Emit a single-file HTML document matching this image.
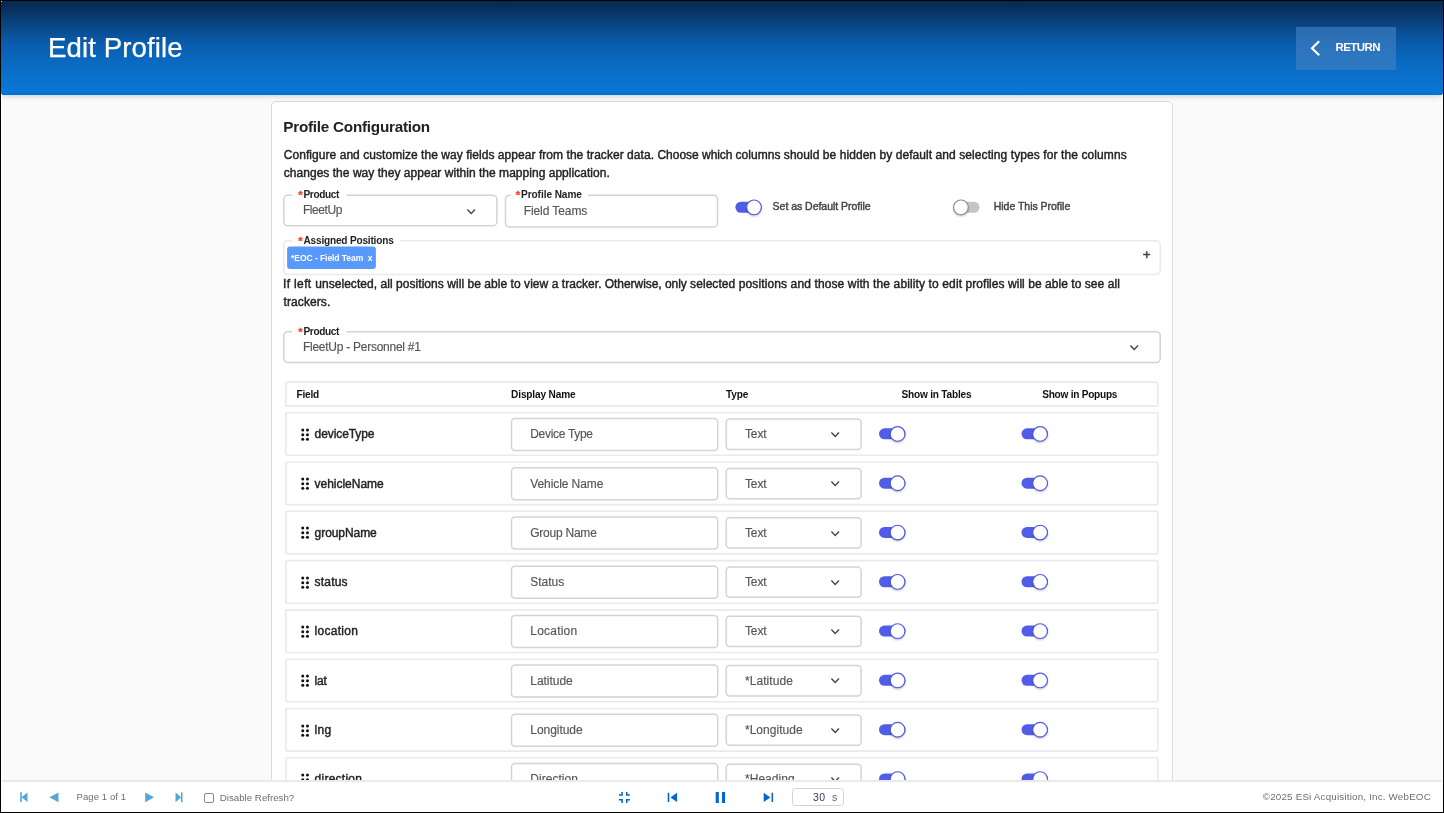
<!DOCTYPE html>
<html lang="en">
<head>
<meta charset="utf-8">
<title>Edit Profile</title>
<style>
*{box-sizing:border-box;margin:0;padding:0}
html,body{width:1444px;height:813px;overflow:hidden}
body{font-family:"Liberation Sans",sans-serif;color:#222;background:#fafafa;position:relative}
.a{position:absolute}
.t{position:absolute;white-space:nowrap}
#hdr{left:1px;top:1px;width:1442px;height:93.5px;border-radius:0 0 3px 3px;
 background:linear-gradient(180deg,#082850 0%,#082b56 4.3%,#09386c 15%,#0a4c8f 31%,#0a5eb0 47%,#0a68bf 63%,#0a72ce 84.4%,#0878d9 100%);
 box-shadow:0 1px 6px rgba(0,0,0,.19)}
#ret{left:1296px;top:26.6px;width:99.7px;height:43.3px;background:rgba(66,129,196,.64)}
#card{left:271px;top:101px;width:902px;height:760px;background:#fff;border:1px solid #dadada;border-radius:5px}
#foot{left:1px;top:780px;width:1442px;height:32px;background:#fff;border-top:2px solid #eaeaea}
.edge{background:#000}
</style>
</head>
<body>
<div class="a" id="card"></div>
<div class="a" id="hdr"></div>
<div class="a" style="left:1px;top:93px;width:1442px;height:1.6px;background:#0470d7;border-radius:0 0 3px 3px"></div>
<div class="a" id="ret"></div>
<svg class="a" style="left:1308px;top:38px" width="16" height="20" viewBox="0 0 16 20"><path d="M11.2 3.3 L4 10.3 L11.2 17.3" fill="none" stroke="#fff" stroke-width="2.2" stroke-linecap="butt" stroke-linejoin="miter"/></svg>
<svg class="a" style="left:0;top:0" width="1444" height="813" viewBox="0 0 1444 813"><defs><filter id="kb" x="-50%" y="-50%" width="200%" height="200%"><feGaussianBlur stdDeviation="0.9"/></filter></defs><rect x="283.8" y="195.25" width="213.1" height="30.45" rx="4" fill="#fff" stroke="#d3d3d3" stroke-width="1.5"/><rect x="292.3" y="193.75" width="54.2" height="3" fill="#fff"/><rect x="505.5" y="195.2" width="212" height="31.7" rx="4" fill="#fff" stroke="#d3d3d3" stroke-width="1.5"/><rect x="510.8" y="193.7" width="77.2" height="3" fill="#fff"/><rect x="283.7" y="240.8" width="876.6" height="33.65" rx="4" fill="#fff" stroke="#e9e9ee" stroke-width="1.6"/><rect x="292.3" y="239.3" width="108.2" height="3" fill="#fff"/><rect x="283.8" y="331.7" width="876.4" height="30.9" rx="4" fill="#fff" stroke="#d3d3d3" stroke-width="1.5"/><rect x="292.3" y="330.2" width="54.2" height="3" fill="#fff"/><rect x="287.1" y="246.6" width="88.8" height="22.3" rx="3" fill="#5999fb"/><rect x="285.8" y="382.1" width="872" height="24" rx="1.2" fill="#fff" stroke="#e9eaf0" stroke-width="1.6"/><rect x="285.8" y="412.7" width="872" height="42.6" rx="1.2" fill="#fff" stroke="#e9eaf0" stroke-width="1.6"/><rect x="511.5" y="418.4" width="206.2" height="32" rx="3.5" fill="#fff" stroke="#d4d4d4" stroke-width="1.5"/><rect x="726.2" y="419.1" width="134.9" height="30.3" rx="3.5" fill="#fff" stroke="#d4d4d4" stroke-width="1.5"/><rect x="285.8" y="462" width="872" height="42.6" rx="1.2" fill="#fff" stroke="#e9eaf0" stroke-width="1.6"/><rect x="511.5" y="467.7" width="206.2" height="32" rx="3.5" fill="#fff" stroke="#d4d4d4" stroke-width="1.5"/><rect x="726.2" y="468.4" width="134.9" height="30.3" rx="3.5" fill="#fff" stroke="#d4d4d4" stroke-width="1.5"/><rect x="285.8" y="511.3" width="872" height="42.6" rx="1.2" fill="#fff" stroke="#e9eaf0" stroke-width="1.6"/><rect x="511.5" y="517" width="206.2" height="32" rx="3.5" fill="#fff" stroke="#d4d4d4" stroke-width="1.5"/><rect x="726.2" y="517.7" width="134.9" height="30.3" rx="3.5" fill="#fff" stroke="#d4d4d4" stroke-width="1.5"/><rect x="285.8" y="560.6" width="872" height="42.6" rx="1.2" fill="#fff" stroke="#e9eaf0" stroke-width="1.6"/><rect x="511.5" y="566.3" width="206.2" height="32" rx="3.5" fill="#fff" stroke="#d4d4d4" stroke-width="1.5"/><rect x="726.2" y="567" width="134.9" height="30.3" rx="3.5" fill="#fff" stroke="#d4d4d4" stroke-width="1.5"/><rect x="285.8" y="609.9" width="872" height="42.6" rx="1.2" fill="#fff" stroke="#e9eaf0" stroke-width="1.6"/><rect x="511.5" y="615.6" width="206.2" height="32" rx="3.5" fill="#fff" stroke="#d4d4d4" stroke-width="1.5"/><rect x="726.2" y="616.3" width="134.9" height="30.3" rx="3.5" fill="#fff" stroke="#d4d4d4" stroke-width="1.5"/><rect x="285.8" y="659.2" width="872" height="42.6" rx="1.2" fill="#fff" stroke="#e9eaf0" stroke-width="1.6"/><rect x="511.5" y="664.9" width="206.2" height="32" rx="3.5" fill="#fff" stroke="#d4d4d4" stroke-width="1.5"/><rect x="726.2" y="665.6" width="134.9" height="30.3" rx="3.5" fill="#fff" stroke="#d4d4d4" stroke-width="1.5"/><rect x="285.8" y="708.5" width="872" height="42.6" rx="1.2" fill="#fff" stroke="#e9eaf0" stroke-width="1.6"/><rect x="511.5" y="714.2" width="206.2" height="32" rx="3.5" fill="#fff" stroke="#d4d4d4" stroke-width="1.5"/><rect x="726.2" y="714.9" width="134.9" height="30.3" rx="3.5" fill="#fff" stroke="#d4d4d4" stroke-width="1.5"/><rect x="285.8" y="757.8" width="872" height="42.6" rx="1.2" fill="#fff" stroke="#e9eaf0" stroke-width="1.6"/><rect x="511.5" y="763.5" width="206.2" height="32" rx="3.5" fill="#fff" stroke="#d4d4d4" stroke-width="1.5"/><rect x="726.2" y="764.2" width="134.9" height="30.3" rx="3.5" fill="#fff" stroke="#d4d4d4" stroke-width="1.5"/></svg>
<div class="t" style="left:298.3px;top:189px;font-size:11.5px;line-height:13px;color:#f44336;font-weight:bold;-webkit-text-stroke:0.3px #f44336">*</div>
<div class="t" style="left:515.8px;top:189px;font-size:11.5px;line-height:13px;color:#f44336;font-weight:bold;-webkit-text-stroke:0.3px #f44336">*</div>
<div class="t" style="left:298.3px;top:235px;font-size:11.5px;line-height:13px;color:#f44336;font-weight:bold;-webkit-text-stroke:0.3px #f44336">*</div>
<div class="t" style="left:298.3px;top:326px;font-size:11.5px;line-height:13px;color:#f44336;font-weight:bold;-webkit-text-stroke:0.3px #f44336">*</div>
<svg class="a" style="left:466px;top:208px" width="10.4" height="7.1" viewBox="-1 -1 10.4 7.1"><path d="M0.4 0.5 L4.2 4.5 L8 0.5" fill="none" stroke="#444" stroke-width="1.35" stroke-linejoin="miter"/></svg>
<svg class="a" style="left:1129.2px;top:343.7px" width="10.4" height="7.1" viewBox="-1 -1 10.4 7.1"><path d="M0.4 0.5 L4.2 4.5 L8 0.5" fill="none" stroke="#444" stroke-width="1.35" stroke-linejoin="miter"/></svg>
<svg class="a" style="left:732px;top:195px" width="36" height="26" viewBox="0 0 36 26"><rect x="3.4" y="6.75" width="26.5" height="11" rx="5.5" fill="#525de7"/><ellipse cx="22" cy="13.65" rx="7.6" ry="7.4" fill="rgba(0,0,0,.28)" filter="url(#kb)"/><circle cx="22" cy="12.35" r="7.35" fill="#fff" stroke="#4f59e2" stroke-width="1.1"/></svg>
<svg class="a" style="left:950px;top:195px" width="36" height="26" viewBox="0 0 36 26"><rect x="3" y="6.75" width="26.5" height="11" rx="5.5" fill="#c5c5c5"/><ellipse cx="10.9" cy="13.65" rx="7.6" ry="7.4" fill="rgba(0,0,0,.28)" filter="url(#kb)"/><circle cx="10.9" cy="12.35" r="7.35" fill="#fff" stroke="#8a8a8a" stroke-width="1.1"/></svg>
<svg class="a" style="left:300px;top:425.85px" width="10" height="16" viewBox="0 0 10 16"><circle cx="2.75" cy="4" r="1.5" fill="#111"/><circle cx="2.75" cy="8.7" r="1.5" fill="#111"/><circle cx="2.75" cy="13.3" r="1.5" fill="#111"/><circle cx="7.45" cy="4" r="1.5" fill="#111"/><circle cx="7.45" cy="8.7" r="1.5" fill="#111"/><circle cx="7.45" cy="13.3" r="1.5" fill="#111"/></svg>
<svg class="a" style="left:830px;top:430.9px" width="10.4" height="7.1" viewBox="-1 -1 10.4 7.1"><path d="M0.4 0.5 L4.2 4.5 L8 0.5" fill="none" stroke="#444" stroke-width="1.35" stroke-linejoin="miter"/></svg>
<svg class="a" style="left:876px;top:421px" width="36" height="26" viewBox="0 0 36 26"><rect x="3" y="7.35" width="26.5" height="11" rx="5.5" fill="#525de7"/><ellipse cx="21.6" cy="14.25" rx="7.6" ry="7.4" fill="rgba(0,0,0,.28)" filter="url(#kb)"/><circle cx="21.6" cy="12.95" r="7.35" fill="#fff" stroke="#4f59e2" stroke-width="1.1"/></svg>
<svg class="a" style="left:1018px;top:421px" width="36" height="26" viewBox="0 0 36 26"><rect x="3.5" y="7.35" width="26.5" height="11" rx="5.5" fill="#525de7"/><ellipse cx="22.1" cy="14.25" rx="7.6" ry="7.4" fill="rgba(0,0,0,.28)" filter="url(#kb)"/><circle cx="22.1" cy="12.95" r="7.35" fill="#fff" stroke="#4f59e2" stroke-width="1.1"/></svg>
<svg class="a" style="left:300px;top:475.15px" width="10" height="16" viewBox="0 0 10 16"><circle cx="2.75" cy="4" r="1.5" fill="#111"/><circle cx="2.75" cy="8.7" r="1.5" fill="#111"/><circle cx="2.75" cy="13.3" r="1.5" fill="#111"/><circle cx="7.45" cy="4" r="1.5" fill="#111"/><circle cx="7.45" cy="8.7" r="1.5" fill="#111"/><circle cx="7.45" cy="13.3" r="1.5" fill="#111"/></svg>
<svg class="a" style="left:830px;top:480.2px" width="10.4" height="7.1" viewBox="-1 -1 10.4 7.1"><path d="M0.4 0.5 L4.2 4.5 L8 0.5" fill="none" stroke="#444" stroke-width="1.35" stroke-linejoin="miter"/></svg>
<svg class="a" style="left:876px;top:471px" width="36" height="26" viewBox="0 0 36 26"><rect x="3" y="6.65" width="26.5" height="11" rx="5.5" fill="#525de7"/><ellipse cx="21.6" cy="13.55" rx="7.6" ry="7.4" fill="rgba(0,0,0,.28)" filter="url(#kb)"/><circle cx="21.6" cy="12.25" r="7.35" fill="#fff" stroke="#4f59e2" stroke-width="1.1"/></svg>
<svg class="a" style="left:1018px;top:471px" width="36" height="26" viewBox="0 0 36 26"><rect x="3.5" y="6.65" width="26.5" height="11" rx="5.5" fill="#525de7"/><ellipse cx="22.1" cy="13.55" rx="7.6" ry="7.4" fill="rgba(0,0,0,.28)" filter="url(#kb)"/><circle cx="22.1" cy="12.25" r="7.35" fill="#fff" stroke="#4f59e2" stroke-width="1.1"/></svg>
<svg class="a" style="left:300px;top:524.45px" width="10" height="16" viewBox="0 0 10 16"><circle cx="2.75" cy="4" r="1.5" fill="#111"/><circle cx="2.75" cy="8.7" r="1.5" fill="#111"/><circle cx="2.75" cy="13.3" r="1.5" fill="#111"/><circle cx="7.45" cy="4" r="1.5" fill="#111"/><circle cx="7.45" cy="8.7" r="1.5" fill="#111"/><circle cx="7.45" cy="13.3" r="1.5" fill="#111"/></svg>
<svg class="a" style="left:830px;top:529.5px" width="10.4" height="7.1" viewBox="-1 -1 10.4 7.1"><path d="M0.4 0.5 L4.2 4.5 L8 0.5" fill="none" stroke="#444" stroke-width="1.35" stroke-linejoin="miter"/></svg>
<svg class="a" style="left:876px;top:520px" width="36" height="26" viewBox="0 0 36 26"><rect x="3" y="6.95" width="26.5" height="11" rx="5.5" fill="#525de7"/><ellipse cx="21.6" cy="13.85" rx="7.6" ry="7.4" fill="rgba(0,0,0,.28)" filter="url(#kb)"/><circle cx="21.6" cy="12.55" r="7.35" fill="#fff" stroke="#4f59e2" stroke-width="1.1"/></svg>
<svg class="a" style="left:1018px;top:520px" width="36" height="26" viewBox="0 0 36 26"><rect x="3.5" y="6.95" width="26.5" height="11" rx="5.5" fill="#525de7"/><ellipse cx="22.1" cy="13.85" rx="7.6" ry="7.4" fill="rgba(0,0,0,.28)" filter="url(#kb)"/><circle cx="22.1" cy="12.55" r="7.35" fill="#fff" stroke="#4f59e2" stroke-width="1.1"/></svg>
<svg class="a" style="left:300px;top:573.75px" width="10" height="16" viewBox="0 0 10 16"><circle cx="2.75" cy="4" r="1.5" fill="#111"/><circle cx="2.75" cy="8.7" r="1.5" fill="#111"/><circle cx="2.75" cy="13.3" r="1.5" fill="#111"/><circle cx="7.45" cy="4" r="1.5" fill="#111"/><circle cx="7.45" cy="8.7" r="1.5" fill="#111"/><circle cx="7.45" cy="13.3" r="1.5" fill="#111"/></svg>
<svg class="a" style="left:830px;top:578.8px" width="10.4" height="7.1" viewBox="-1 -1 10.4 7.1"><path d="M0.4 0.5 L4.2 4.5 L8 0.5" fill="none" stroke="#444" stroke-width="1.35" stroke-linejoin="miter"/></svg>
<svg class="a" style="left:876px;top:569px" width="36" height="26" viewBox="0 0 36 26"><rect x="3" y="7.25" width="26.5" height="11" rx="5.5" fill="#525de7"/><ellipse cx="21.6" cy="14.15" rx="7.6" ry="7.4" fill="rgba(0,0,0,.28)" filter="url(#kb)"/><circle cx="21.6" cy="12.85" r="7.35" fill="#fff" stroke="#4f59e2" stroke-width="1.1"/></svg>
<svg class="a" style="left:1018px;top:569px" width="36" height="26" viewBox="0 0 36 26"><rect x="3.5" y="7.25" width="26.5" height="11" rx="5.5" fill="#525de7"/><ellipse cx="22.1" cy="14.15" rx="7.6" ry="7.4" fill="rgba(0,0,0,.28)" filter="url(#kb)"/><circle cx="22.1" cy="12.85" r="7.35" fill="#fff" stroke="#4f59e2" stroke-width="1.1"/></svg>
<svg class="a" style="left:300px;top:623.05px" width="10" height="16" viewBox="0 0 10 16"><circle cx="2.75" cy="4" r="1.5" fill="#111"/><circle cx="2.75" cy="8.7" r="1.5" fill="#111"/><circle cx="2.75" cy="13.3" r="1.5" fill="#111"/><circle cx="7.45" cy="4" r="1.5" fill="#111"/><circle cx="7.45" cy="8.7" r="1.5" fill="#111"/><circle cx="7.45" cy="13.3" r="1.5" fill="#111"/></svg>
<svg class="a" style="left:830px;top:628.1px" width="10.4" height="7.1" viewBox="-1 -1 10.4 7.1"><path d="M0.4 0.5 L4.2 4.5 L8 0.5" fill="none" stroke="#444" stroke-width="1.35" stroke-linejoin="miter"/></svg>
<svg class="a" style="left:876px;top:619px" width="36" height="26" viewBox="0 0 36 26"><rect x="3" y="6.55" width="26.5" height="11" rx="5.5" fill="#525de7"/><ellipse cx="21.6" cy="13.45" rx="7.6" ry="7.4" fill="rgba(0,0,0,.28)" filter="url(#kb)"/><circle cx="21.6" cy="12.15" r="7.35" fill="#fff" stroke="#4f59e2" stroke-width="1.1"/></svg>
<svg class="a" style="left:1018px;top:619px" width="36" height="26" viewBox="0 0 36 26"><rect x="3.5" y="6.55" width="26.5" height="11" rx="5.5" fill="#525de7"/><ellipse cx="22.1" cy="13.45" rx="7.6" ry="7.4" fill="rgba(0,0,0,.28)" filter="url(#kb)"/><circle cx="22.1" cy="12.15" r="7.35" fill="#fff" stroke="#4f59e2" stroke-width="1.1"/></svg>
<svg class="a" style="left:300px;top:672.35px" width="10" height="16" viewBox="0 0 10 16"><circle cx="2.75" cy="4" r="1.5" fill="#111"/><circle cx="2.75" cy="8.7" r="1.5" fill="#111"/><circle cx="2.75" cy="13.3" r="1.5" fill="#111"/><circle cx="7.45" cy="4" r="1.5" fill="#111"/><circle cx="7.45" cy="8.7" r="1.5" fill="#111"/><circle cx="7.45" cy="13.3" r="1.5" fill="#111"/></svg>
<svg class="a" style="left:830px;top:677.4px" width="10.4" height="7.1" viewBox="-1 -1 10.4 7.1"><path d="M0.4 0.5 L4.2 4.5 L8 0.5" fill="none" stroke="#444" stroke-width="1.35" stroke-linejoin="miter"/></svg>
<svg class="a" style="left:876px;top:668px" width="36" height="26" viewBox="0 0 36 26"><rect x="3" y="6.85" width="26.5" height="11" rx="5.5" fill="#525de7"/><ellipse cx="21.6" cy="13.75" rx="7.6" ry="7.4" fill="rgba(0,0,0,.28)" filter="url(#kb)"/><circle cx="21.6" cy="12.45" r="7.35" fill="#fff" stroke="#4f59e2" stroke-width="1.1"/></svg>
<svg class="a" style="left:1018px;top:668px" width="36" height="26" viewBox="0 0 36 26"><rect x="3.5" y="6.85" width="26.5" height="11" rx="5.5" fill="#525de7"/><ellipse cx="22.1" cy="13.75" rx="7.6" ry="7.4" fill="rgba(0,0,0,.28)" filter="url(#kb)"/><circle cx="22.1" cy="12.45" r="7.35" fill="#fff" stroke="#4f59e2" stroke-width="1.1"/></svg>
<svg class="a" style="left:300px;top:721.65px" width="10" height="16" viewBox="0 0 10 16"><circle cx="2.75" cy="4" r="1.5" fill="#111"/><circle cx="2.75" cy="8.7" r="1.5" fill="#111"/><circle cx="2.75" cy="13.3" r="1.5" fill="#111"/><circle cx="7.45" cy="4" r="1.5" fill="#111"/><circle cx="7.45" cy="8.7" r="1.5" fill="#111"/><circle cx="7.45" cy="13.3" r="1.5" fill="#111"/></svg>
<svg class="a" style="left:830px;top:726.7px" width="10.4" height="7.1" viewBox="-1 -1 10.4 7.1"><path d="M0.4 0.5 L4.2 4.5 L8 0.5" fill="none" stroke="#444" stroke-width="1.35" stroke-linejoin="miter"/></svg>
<svg class="a" style="left:876px;top:717px" width="36" height="26" viewBox="0 0 36 26"><rect x="3" y="7.15" width="26.5" height="11" rx="5.5" fill="#525de7"/><ellipse cx="21.6" cy="14.05" rx="7.6" ry="7.4" fill="rgba(0,0,0,.28)" filter="url(#kb)"/><circle cx="21.6" cy="12.75" r="7.35" fill="#fff" stroke="#4f59e2" stroke-width="1.1"/></svg>
<svg class="a" style="left:1018px;top:717px" width="36" height="26" viewBox="0 0 36 26"><rect x="3.5" y="7.15" width="26.5" height="11" rx="5.5" fill="#525de7"/><ellipse cx="22.1" cy="14.05" rx="7.6" ry="7.4" fill="rgba(0,0,0,.28)" filter="url(#kb)"/><circle cx="22.1" cy="12.75" r="7.35" fill="#fff" stroke="#4f59e2" stroke-width="1.1"/></svg>
<svg class="a" style="left:300px;top:770.95px" width="10" height="16" viewBox="0 0 10 16"><circle cx="2.75" cy="4" r="1.5" fill="#111"/><circle cx="2.75" cy="8.7" r="1.5" fill="#111"/><circle cx="2.75" cy="13.3" r="1.5" fill="#111"/><circle cx="7.45" cy="4" r="1.5" fill="#111"/><circle cx="7.45" cy="8.7" r="1.5" fill="#111"/><circle cx="7.45" cy="13.3" r="1.5" fill="#111"/></svg>
<svg class="a" style="left:830px;top:776px" width="10.4" height="7.1" viewBox="-1 -1 10.4 7.1"><path d="M0.4 0.5 L4.2 4.5 L8 0.5" fill="none" stroke="#444" stroke-width="1.35" stroke-linejoin="miter"/></svg>
<svg class="a" style="left:876px;top:766px" width="36" height="26" viewBox="0 0 36 26"><rect x="3" y="7.45" width="26.5" height="11" rx="5.5" fill="#525de7"/><ellipse cx="21.6" cy="14.35" rx="7.6" ry="7.4" fill="rgba(0,0,0,.28)" filter="url(#kb)"/><circle cx="21.6" cy="13.05" r="7.35" fill="#fff" stroke="#4f59e2" stroke-width="1.1"/></svg>
<svg class="a" style="left:1018px;top:766px" width="36" height="26" viewBox="0 0 36 26"><rect x="3.5" y="7.45" width="26.5" height="11" rx="5.5" fill="#525de7"/><ellipse cx="22.1" cy="14.35" rx="7.6" ry="7.4" fill="rgba(0,0,0,.28)" filter="url(#kb)"/><circle cx="22.1" cy="13.05" r="7.35" fill="#fff" stroke="#4f59e2" stroke-width="1.1"/></svg>
<div class="a" id="tx" style="left:0;top:0;width:1444px;height:813px;will-change:transform">
<div class="t" style="left:47.92px;top:31px;font-size:27.6px;line-height:33px;color:#fff;letter-spacing:0.12px;-webkit-text-stroke:0.25px #fff">Edit Profile</div>
<div class="t" style="left:1335.5px;top:40px;font-size:11.5px;line-height:14px;color:#fff;font-weight:bold;letter-spacing:-0.58px">RETURN</div>
<div class="t" style="left:283.3px;top:117px;font-size:15.25px;line-height:19px;color:#222;font-weight:bold;letter-spacing:-0.24px">Profile Configuration</div>
<div class="t" style="left:283.81px;top:147px;font-size:12px;line-height:16px;color:#222;letter-spacing:0.05px;-webkit-text-stroke:0.42px #222">Configure and customize the way fields appear from </div>
<div class="t" style="left:566.51px;top:147px;font-size:12px;line-height:16px;color:#222;letter-spacing:0.05px;-webkit-text-stroke:0.42px #222">the tracker data. </div>
<div class="t" style="left:657.41px;top:147px;font-size:12px;line-height:16px;color:#222;-webkit-text-stroke:0.42px #222">Choose </div>
<div class="t" style="left:702.11px;top:147px;font-size:12px;line-height:16px;color:#222;letter-spacing:-0.1px;-webkit-text-stroke:0.42px #222">which </div>
<div class="t" style="left:735.51px;top:147px;font-size:12px;line-height:16px;color:#222;letter-spacing:0.04px;-webkit-text-stroke:0.42px #222">columns should be </div>
<div class="t" style="left:839.71px;top:147px;font-size:12px;line-height:16px;color:#222;letter-spacing:0.06px;-webkit-text-stroke:0.42px #222">hidden by default and </div>
<div class="t" style="left:959.21px;top:147px;font-size:12px;line-height:16px;color:#222;letter-spacing:0.09px;-webkit-text-stroke:0.42px #222">selecting types for the columns</div>
<div class="t" style="left:283.81px;top:165px;font-size:12px;line-height:16px;color:#222;letter-spacing:0.03px;-webkit-text-stroke:0.42px #222">changes the way they appear within the mapping application.</div>
<div class="t" style="left:303.5px;top:188px;font-size:10.1px;line-height:13px;color:#222;font-weight:bold;letter-spacing:-0.36px">Product</div>
<div class="t" style="left:521px;top:188px;font-size:10.1px;line-height:13px;color:#222;font-weight:bold;letter-spacing:-0.07px">Profile Name</div>
<div class="t" style="left:303.5px;top:234px;font-size:10.1px;line-height:13px;color:#222;font-weight:bold;letter-spacing:-0.2px">Assigned Positions</div>
<div class="t" style="left:303.5px;top:325px;font-size:10.1px;line-height:13px;color:#222;font-weight:bold;letter-spacing:-0.36px">Product</div>
<div class="t" style="left:302.97px;top:202px;font-size:12px;line-height:16px;color:#555;letter-spacing:-0.43px;-webkit-text-stroke:0.15px #555">FleetUp</div>
<div class="t" style="left:523.68px;top:203px;font-size:12px;line-height:16px;color:#555;letter-spacing:-0.08px;-webkit-text-stroke:0.15px #555">Field Teams</div>
<div class="t" style="left:302.97px;top:339px;font-size:12px;line-height:16px;color:#555;letter-spacing:-0.26px;-webkit-text-stroke:0.15px #555">FleetUp - Personnel #1</div>
<div class="t" style="left:772.61px;top:199px;font-size:10.5px;line-height:14px;color:#444;letter-spacing:-0.03px;-webkit-text-stroke:0.42px #444">Set as Default Profile</div>
<div class="t" style="left:993.71px;top:199px;font-size:10.5px;line-height:14px;color:#444;letter-spacing:-0.02px;-webkit-text-stroke:0.42px #444">Hide This Profile</div>
<div class="t" style="left:291.1px;top:252px;font-size:8.5px;line-height:12px;color:#fff;font-weight:bold;letter-spacing:-0.06px">*EOC - Field Team</div>
<div class="t" style="left:367.7px;top:252px;font-size:8.5px;line-height:12px;color:#fff;font-weight:bold">x</div>
<div class="t" style="left:1142.68px;top:246px;font-size:13.5px;line-height:17px;color:#444;-webkit-text-stroke:0.55px #444">+</div>
<div class="t" style="left:283.01px;top:276px;font-size:12px;line-height:16px;color:#222;letter-spacing:0.36px;-webkit-text-stroke:0.42px #222">If left </div>
<div class="t" style="left:315.21px;top:276px;font-size:12px;line-height:16px;color:#222;letter-spacing:0.05px;-webkit-text-stroke:0.42px #222">unselected, all positions will be able to view a tracker. </div>
<div class="t" style="left:604.71px;top:276px;font-size:12px;line-height:16px;color:#222;letter-spacing:-0.04px;-webkit-text-stroke:0.42px #222">Otherwise, only </div>
<div class="t" style="left:690.11px;top:276px;font-size:12px;line-height:16px;color:#222;letter-spacing:0.06px;-webkit-text-stroke:0.42px #222">selected </div>
<div class="t" style="left:738.71px;top:276px;font-size:12px;line-height:16px;color:#222;letter-spacing:0.12px;-webkit-text-stroke:0.42px #222">positions and those with the ability to edit </div>
<div class="t" style="left:965.51px;top:276px;font-size:12px;line-height:16px;color:#222;letter-spacing:0.05px;-webkit-text-stroke:0.42px #222">profiles will be able to see all</div>
<div class="t" style="left:283.61px;top:294px;font-size:12px;line-height:16px;color:#222;letter-spacing:0.08px;-webkit-text-stroke:0.42px #222">trackers.</div>
<div class="t" style="left:296.6px;top:388px;font-size:10.1px;line-height:13px;color:#111;font-weight:bold;letter-spacing:-0.25px">Field</div>
<div class="t" style="left:511.1px;top:388px;font-size:10.1px;line-height:13px;color:#111;font-weight:bold;letter-spacing:-0.15px">Display Name</div>
<div class="t" style="left:726.1px;top:388px;font-size:10.1px;line-height:13px;color:#111;font-weight:bold;letter-spacing:-0.2px">Type</div>
<div class="t" style="left:901.5px;top:388px;font-size:10.1px;line-height:13px;color:#111;font-weight:bold;letter-spacing:-0.21px">Show in Tables</div>
<div class="t" style="left:1042.2px;top:388px;font-size:10.1px;line-height:13px;color:#111;font-weight:bold;letter-spacing:-0.25px">Show in Popups</div>
<div class="t" style="left:314.61px;top:426px;font-size:12px;line-height:16px;color:#222;letter-spacing:-0.09px;-webkit-text-stroke:0.42px #222">deviceType</div>
<div class="t" style="left:530.28px;top:426px;font-size:12px;line-height:16px;color:#555;letter-spacing:-0.31px;-webkit-text-stroke:0.15px #555">Device Type</div>
<div class="t" style="left:744.98px;top:426px;font-size:12px;line-height:16px;color:#555;letter-spacing:-0.11px;-webkit-text-stroke:0.15px #555">Text</div>
<div class="t" style="left:314.61px;top:476px;font-size:12px;line-height:16px;color:#222;letter-spacing:-0.03px;-webkit-text-stroke:0.42px #222">vehicleName</div>
<div class="t" style="left:530.28px;top:476px;font-size:12px;line-height:16px;color:#555;letter-spacing:-0.09px;-webkit-text-stroke:0.15px #555">Vehicle Name</div>
<div class="t" style="left:744.98px;top:476px;font-size:12px;line-height:16px;color:#555;letter-spacing:-0.11px;-webkit-text-stroke:0.15px #555">Text</div>
<div class="t" style="left:314.61px;top:525px;font-size:12px;line-height:16px;color:#222;letter-spacing:-0.07px;-webkit-text-stroke:0.42px #222">groupName</div>
<div class="t" style="left:530.28px;top:525px;font-size:12px;line-height:16px;color:#555;letter-spacing:-0.24px;-webkit-text-stroke:0.15px #555">Group Name</div>
<div class="t" style="left:744.98px;top:525px;font-size:12px;line-height:16px;color:#555;letter-spacing:-0.11px;-webkit-text-stroke:0.15px #555">Text</div>
<div class="t" style="left:314.61px;top:574px;font-size:12px;line-height:16px;color:#222;letter-spacing:0.17px;-webkit-text-stroke:0.42px #222">status</div>
<div class="t" style="left:530.28px;top:574px;font-size:12px;line-height:16px;color:#555;letter-spacing:-0.01px;-webkit-text-stroke:0.15px #555">Status</div>
<div class="t" style="left:744.98px;top:574px;font-size:12px;line-height:16px;color:#555;letter-spacing:-0.11px;-webkit-text-stroke:0.15px #555">Text</div>
<div class="t" style="left:314.61px;top:623px;font-size:12px;line-height:16px;color:#222;letter-spacing:0.27px;-webkit-text-stroke:0.42px #222">location</div>
<div class="t" style="left:530.28px;top:623px;font-size:12px;line-height:16px;color:#555;letter-spacing:0.21px;-webkit-text-stroke:0.15px #555">Location</div>
<div class="t" style="left:744.98px;top:623px;font-size:12px;line-height:16px;color:#555;letter-spacing:-0.11px;-webkit-text-stroke:0.15px #555">Text</div>
<div class="t" style="left:314.61px;top:673px;font-size:12px;line-height:16px;color:#222;letter-spacing:-0.18px;-webkit-text-stroke:0.42px #222">lat</div>
<div class="t" style="left:530.28px;top:673px;font-size:12px;line-height:16px;color:#555;letter-spacing:-0.03px;-webkit-text-stroke:0.15px #555">Latitude</div>
<div class="t" style="left:744.98px;top:673px;font-size:12px;line-height:16px;color:#555;letter-spacing:0.06px;-webkit-text-stroke:0.15px #555">*Latitude</div>
<div class="t" style="left:314.61px;top:722px;font-size:12px;line-height:16px;color:#222;letter-spacing:0.22px;-webkit-text-stroke:0.42px #222">lng</div>
<div class="t" style="left:530.28px;top:722px;font-size:12px;line-height:16px;color:#555;letter-spacing:-0.05px;-webkit-text-stroke:0.15px #555">Longitude</div>
<div class="t" style="left:744.98px;top:722px;font-size:12px;line-height:16px;color:#555;letter-spacing:0.03px;-webkit-text-stroke:0.15px #555">*Longitude</div>
<div class="t" style="left:314.61px;top:771px;font-size:12px;line-height:16px;color:#222;letter-spacing:0.25px;-webkit-text-stroke:0.42px #222">direction</div>
<div class="t" style="left:530.28px;top:771px;font-size:12px;line-height:16px;color:#555;letter-spacing:0.03px;-webkit-text-stroke:0.15px #555">Direction</div>
<div class="t" style="left:744.98px;top:771px;font-size:12px;line-height:16px;color:#555;letter-spacing:0.04px;-webkit-text-stroke:0.15px #555">*Heading</div>
</div>
<div class="a" id="foot"></div>
<svg class="a" style="left:19px;top:791px" width="10" height="13" viewBox="0 0 10 13"><rect x="1.2" y="1.2" width="1.6" height="10" fill="#55a5d8"/><path d="M2.6 6.2 L8.5 1.4 V11 Z" fill="#55a5d8"/></svg>
<svg class="a" style="left:48px;top:791px" width="12" height="13" viewBox="0 0 12 13"><path d="M1.3 6.3 L10.5 1.4 V11.2 Z" fill="#55a5d8"/></svg>
<svg class="a" style="left:144px;top:791px" width="12" height="13" viewBox="0 0 12 13"><path d="M10 6.3 L1.2 1.4 V11.2 Z" fill="#55a5d8"/></svg>
<svg class="a" style="left:174px;top:791px" width="10" height="13" viewBox="0 0 10 13"><rect x="7" y="1.4" width="1.5" height="9.8" fill="#55a5d8"/><path d="M7.2 6.3 L1.5 1.4 V11.2 Z" fill="#55a5d8"/></svg>
<div class="a" style="left:203.7px;top:793.1px;width:10px;height:9.8px;border:1px solid #8a8a8a;border-radius:2px;background:#fff"></div>
<svg class="a" style="left:615.1px;top:788px" width="18.8" height="18.8" viewBox="0 0 24 24"><path d="M5 16h3v3h2v-5H5v2zm3-8H5v2h5V5H8v3zm6 11h2v-3h3v-2h-5v5zm2-11V5h-2v5h5V8h-3z" fill="#0466cc"/></svg>
<svg class="a" style="left:663.2px;top:788px" width="18.8" height="18.8" viewBox="0 0 24 24"><path d="M6 6h2v12H6zm3.5 6l8.5 6V6z" fill="#0466cc"/></svg>
<svg class="a" style="left:711.3px;top:788px" width="18.8" height="18.8" viewBox="0 0 24 24"><path d="M6 19h4V5H6v14zm8-14v14h4V5h-4z" fill="#0466cc"/></svg>
<svg class="a" style="left:759.2px;top:788px" width="18.8" height="18.8" viewBox="0 0 24 24"><path d="M6 18l8.5-6L6 6v12zM16 6v12h2V6h-2z" fill="#0466cc"/></svg>
<div class="a" style="left:792.3px;top:787.8px;width:51.5px;height:18.2px;border:1px solid #d2d2d2;border-radius:3.5px;background:#fff"></div>
<div class="a" id="ft" style="left:0;top:0;width:1444px;height:813px;will-change:transform">
<div class="t" style="left:76.5px;top:790px;font-size:9.5px;line-height:13px;color:#6e6e6e;letter-spacing:0.1px">Page 1 of 1</div>
<div class="t" style="left:219.8px;top:791px;font-size:9.75px;line-height:13px;color:#6e6e6e;letter-spacing:-0.02px">Disable Refresh?</div>
<div class="t" style="left:813.1px;top:790px;font-size:10.5px;line-height:14px;color:#34415a;letter-spacing:0.26px">30</div>
<div class="t" style="left:832px;top:790px;font-size:10.5px;line-height:14px;color:#5a6375">s</div>
<div class="t" style="left:1262.8px;top:790px;font-size:9.8px;line-height:13px;color:#6e6e6e;letter-spacing:0.19px">©2025 ESi Acquisition, Inc. WebEOC</div>
</div>
<div class="a" style="left:1px;top:94px;width:1px;height:718px;background:#fff"></div>
<div class="a" style="left:1442px;top:94px;width:1px;height:718px;background:#fff"></div>
<div class="a edge" style="left:0;top:0;width:1444px;height:1px"></div>
<div class="a" style="left:1px;top:1px;width:1px;height:1px;background:#e8eefa"></div>
<div class="a edge" style="left:0;top:812px;width:1444px;height:1px"></div>
<div class="a edge" style="left:0;top:0;width:1px;height:813px"></div>
<div class="a edge" style="left:1443px;top:0;width:1px;height:813px"></div>
</body>
</html>
